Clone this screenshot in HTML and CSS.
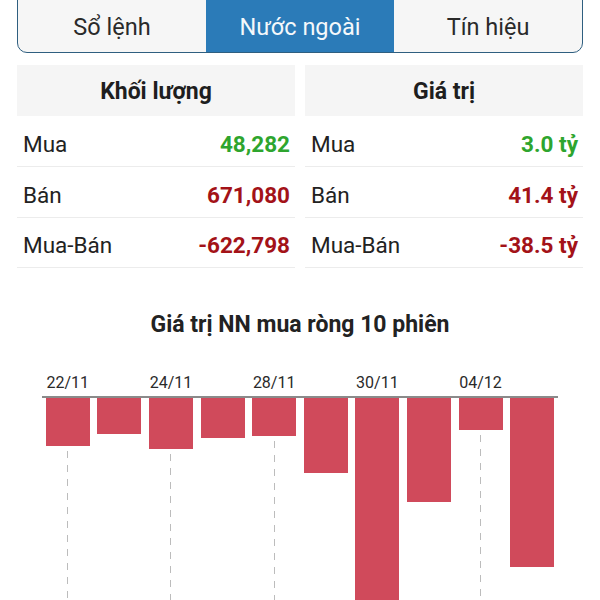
FILE: index.html
```html
<!DOCTYPE html>
<html lang="vi">
<head>
    <meta charset="UTF-8">
    <meta name="viewport" content="width=device-width, initial-scale=1.0">
    <title>Nước ngoài</title>
    <link rel="stylesheet" href="styles.css">
</head>
<body>
    <!-- Tabs -->
    <div class="tabs">
        <div class="tab">Sổ lệnh</div>
        <div class="tab active">Nước ngoài</div>
        <div class="tab">Tín hiệu</div>
    </div>

    <!-- Summary tables -->
    <div class="summary">
        <div class="panel">
            <div class="panel-head">Khối lượng</div>
            <div class="row"><span>Mua</span><span class="val up">48,282</span></div>
            <div class="row"><span>Bán</span><span class="val down">671,080</span></div>
            <div class="row"><span>Mua-Bán</span><span class="val down">-622,798</span></div>
        </div>
        <div class="panel">
            <div class="panel-head">Giá trị</div>
            <div class="row"><span>Mua</span><span class="val up">3.0 tỷ</span></div>
            <div class="row"><span>Bán</span><span class="val down">41.4 tỷ</span></div>
            <div class="row"><span>Mua-Bán</span><span class="val down">-38.5 tỷ</span></div>
        </div>
    </div>

    <!-- Chart -->
    <div class="chart-title">Giá trị NN mua ròng 10 phiên</div>
    <div class="chart">
        <div class="labels">
            <div class="label">22/11</div>
            <div class="label"></div>
            <div class="label">24/11</div>
            <div class="label"></div>
            <div class="label">28/11</div>
            <div class="label"></div>
            <div class="label">30/11</div>
            <div class="label"></div>
            <div class="label">04/12</div>
            <div class="label"></div>
        </div>
        <div class="plot">
            <div class="col"><div class="bar" style="height: 48px"></div><div class="grid"></div></div>
            <div class="col"><div class="bar" style="height: 36px"></div></div>
            <div class="col"><div class="bar" style="height: 51px"></div><div class="grid"></div></div>
            <div class="col"><div class="bar" style="height: 40px"></div></div>
            <div class="col"><div class="bar" style="height: 38px"></div><div class="grid"></div></div>
            <div class="col"><div class="bar" style="height: 75px"></div></div>
            <div class="col"><div class="bar" style="height: 216px"></div><div class="grid"></div></div>
            <div class="col"><div class="bar" style="height: 104px"></div></div>
            <div class="col"><div class="bar" style="height: 32px"></div><div class="grid"></div></div>
            <div class="col"><div class="bar" style="height: 169px"></div></div>
        </div>
    </div>
</body>
</html>
```

FILE: styles.css
```css
* {
    margin: 0;
    padding: 0;
    box-sizing: border-box;
}
body {
    font-family: Roboto, 'Noto Sans', sans-serif;
    background-color: #fff;
    color: #222;
    width: 600px;
    height: 600px;
    overflow: hidden;
}
.tabs {
    display: flex;
    margin: -10px 17px 0;
    height: 63px;
    border: 1.5px solid #2f5f80;
    border-radius: 10px;
    overflow: hidden;
    background-color: #f6f6f6;
}
.tab {
    flex: 1;
    display: flex;
    justify-content: center;
    align-items: center;
    padding-top: 11px;
    font-size: 23.5px;
    color: #2a2a2a;
}
.tab.active {
    background-color: #2b7bb8;
    color: #f4f8fb;
}
.summary {
    display: flex;
    gap: 10px;
    margin: 12px 17px 0;
}
.panel {
    flex: 1;
}
.panel-head {
    height: 51px;
    display: flex;
    justify-content: center;
    align-items: center;
    padding-top: 2px;
    background-color: #f5f5f5;
    font-size: 23px;
    font-weight: bold;
    color: #1e1e1e;
}
.row {
    height: 51px;
    display: flex;
    justify-content: space-between;
    align-items: center;
    padding: 5px 5px 0 6px;
    border-bottom: 1px solid #ececec;
    font-size: 22.5px;
}
.row:last-child {
    height: 50px;
}
.val {
    font-weight: bold;
}
.up {
    color: #2ea52e;
}
.down {
    color: #a31218;
}
.chart-title {
    margin-top: 45px;
    text-align: center;
    font-size: 23px;
    font-weight: bold;
    line-height: 24px;
    color: #222;
}
.chart {
    margin: 37px 42px 0;
}
.labels {
    display: flex;
    height: 18px;
    margin-bottom: 4px;
}
.label {
    flex: 1;
    text-align: center;
    font-size: 16px;
    line-height: 18px;
    color: #2a2a2a;
}
.plot {
    display: flex;
    height: 218px;
    border-top: 2px solid #8a8a8a;
}
.col {
    flex: 1;
    display: flex;
    flex-direction: column;
    align-items: center;
}
.bar {
    width: 44px;
    background-color: #d04a5b;
}
.grid {
    flex: 1;
    width: 1px;
    margin-top: 5px;
    background: repeating-linear-gradient(to bottom, #bcbcbc 0 7px, transparent 7px 14px);
}
```
